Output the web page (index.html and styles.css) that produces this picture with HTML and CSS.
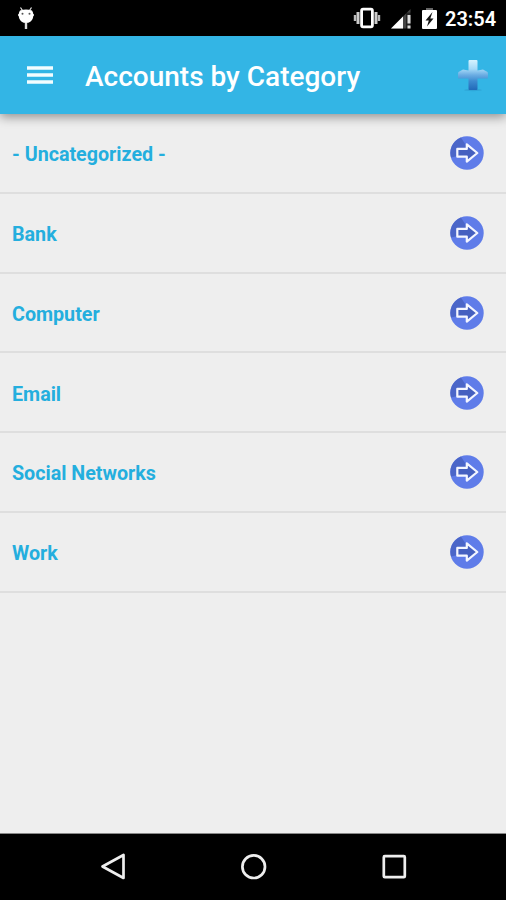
FILE: index.html
```html
<!DOCTYPE html>
<html lang="en">
<head>
    <meta charset="UTF-8">
    <meta name="viewport" content="width=device-width, initial-scale=1.0">
    <title>Accounts by Category</title>
    <link rel="stylesheet" href="styles.css">
</head>
<body>
    <!-- shared arrow icon -->
    <svg class="defs" width="0" height="0">
        <symbol id="arrow" viewBox="0 0 34 34">
            <circle cx="17" cy="17" r="16.7" fill="#5f7ce9"/>
            <path d="M17 11L11 1.4A16.7 16.7 0 0 0 1 21.5L8 20z" fill="#4b66c8"/>
            <path d="M7.3 12.9h9.5V8.4l10.5 8.6-10.5 8.6v-4.9H7.3z" fill="#4560c0" stroke="#f4f6ff" stroke-width="2.2" stroke-linejoin="round"/>
        </symbol>
    </svg>

    <div class="screen">
        <div class="status-bar">
            <svg class="bean" width="18" height="24" viewBox="0 0 18 24">
                <path d="M3.5 1.5l2 3M14.5 1.5l-2 3" stroke="#eee" stroke-width="1.2"/>
                <path d="M3 4.5Q9 2.5 15 4.5C18 9 16 17 9 17S0 9 3 4.5z" fill="#fff"/>
                <path d="M1 9h16" stroke="#fff" stroke-width="1.5"/>
                <path d="M9 17v6" stroke="#ddd" stroke-width="2.4"/>
                <circle cx="5.5" cy="7.8" r="1" fill="#555"/>
                <circle cx="12.5" cy="7.8" r="1" fill="#555"/>
            </svg>
            <div class="status-icons">
                <svg width="28" height="22" viewBox="0 0 28 22">
                    <rect x="8.6" y="2.2" width="10.8" height="17.6" rx="1.5" fill="none" stroke="#fff" stroke-width="2.8"/>
                    <path d="M5 5v12M23 5v12" stroke="#ccc" stroke-width="3"/>
                    <path d="M2 8v6M26 8v6" stroke="#bbb" stroke-width="2.4"/>
                </svg>
                <svg width="21" height="20" viewBox="0 0 21 20">
                    <path d="M0 19.5L19.5 0v19.5z" fill="#444"/>
                    <path d="M0 19.5L12 7.5v12z" fill="#fff"/>
                    <path d="M15 3.5h6v17h-6z" fill="#000" fill-opacity=".5"/>
                    <path d="M18 6v8.5M18 16.5v3" stroke="#ddd" stroke-width="3"/>
                </svg>
                <svg width="15" height="21" viewBox="0 0 15 21">
                    <path d="M4 0h7v2H4z" fill="#666"/>
                    <rect y="2" width="15" height="19" rx="1" fill="#fff"/>
                    <path d="M10.5 4L3.5 12.5h3.3L5 18.5l6.5-8H8.3z" fill="#111"/>
                </svg>
            </div>
            <span class="clock">23:54</span>
        </div>

        <header class="toolbar">
            <svg class="menu" width="26" height="18" viewBox="0 0 26 18">
                <path d="M0 2h26M0 9h26M0 16h26" stroke="#f4fdff" stroke-width="3.4"/>
            </svg>
            <h1>Accounts by Category</h1>
            <svg class="add" width="32" height="34" viewBox="0 0 32 34">
                <defs>
                    <linearGradient id="plus" gradientUnits="userSpaceOnUse" x1="0" y1="2" x2="0" y2="32">
                        <stop offset="0" stop-color="#d5f3ff"/>
                        <stop offset=".3" stop-color="#a5d9f7"/>
                        <stop offset=".5" stop-color="#6bade3"/>
                        <stop offset=".7" stop-color="#3d8bd0"/>
                        <stop offset="1" stop-color="#2169b8"/>
                    </linearGradient>
                </defs>
                <ellipse cx="16" cy="32" rx="9" ry="1.2" fill="#2584b8" fill-opacity=".3"/>
                <path d="M12.5 2h7q1 0 1 1v9.5L26 11.5l4.5 2.5q.8 1 .3 6.500H20.5V31q0 1-1 1h-7q-1 0-1-1V20.5H1.2q-.5-5.500.3-6.500L6 11.500l5.500 1V3q0-1 1-1z" fill="url(#plus)"/>
            </svg>
        </header>

        <ul class="categories">
            <li><span>- Uncategorized -</span><svg class="go"><use href="#arrow"/></svg></li>
            <li><span>Bank</span><svg class="go"><use href="#arrow"/></svg></li>
            <li><span>Computer</span><svg class="go"><use href="#arrow"/></svg></li>
            <li><span>Email</span><svg class="go"><use href="#arrow"/></svg></li>
            <li><span>Social Networks</span><svg class="go"><use href="#arrow"/></svg></li>
            <li><span>Work</span><svg class="go"><use href="#arrow"/></svg></li>
        </ul>

        <nav class="nav-bar">
            <svg width="28" height="28" viewBox="0 0 28 28">
                <path d="M3.5 13.5L24.5 2v23z"/>
            </svg>
            <svg width="28" height="28" viewBox="0 0 28 28">
                <circle cx="13.7" cy="13.7" r="11.3"/>
            </svg>
            <svg width="28" height="28" viewBox="0 0 28 28">
                <rect x="3.8" y="3.2" width="21" height="21" rx="1"/>
            </svg>
        </nav>
    </div>
</body>
</html>
```
FILE: styles.css
```css
* {
    box-sizing: border-box;
}

body {
    margin: 0;
    font-family: Roboto, "Liberation Sans", sans-serif;
    background-color: #eeeeee;
}

svg {
    display: block;
    flex: none;
}

.defs {
    display: none;
}

.screen {
    display: flex;
    flex-direction: column;
    width: 506px;
    height: 900px;
    overflow: hidden;
}

.status-bar {
    display: flex;
    align-items: center;
    height: 36px;
    padding: 0 10px 0 17px;
    background-color: #000;
    color: #fff;
}

.status-icons {
    display: flex;
    align-items: center;
    gap: 10px;
    margin-left: auto;
}

.status-icons svg:nth-child(2) {
    margin-top: 2px;
}

.clock {
    width: 51px;
    margin-left: 8px;
    padding-top: 2px;
    font-size: 20px;
    font-weight: 600;
    white-space: nowrap;
}

.toolbar {
    display: flex;
    align-items: center;
    height: 78px;
    padding: 0 17px 0 27px;
    background-color: #33b5e5;
    box-shadow: 0 3px 10px rgba(0, 0, 0, 0.4);
    z-index: 1;
}

.toolbar h1 {
    margin: 3px 0 0 32px;
    color: #fff;
    font-size: 28px;
    font-weight: 500;
    line-height: 34px;
    white-space: nowrap;
}

.add {
    margin-left: auto;
}

.categories {
    flex: 1;
    margin: 0;
    padding: 0;
    list-style: none;
}

.categories li {
    display: flex;
    align-items: center;
    justify-content: space-between;
    height: 79.75px;
    padding: 1px 22px 0 12px;
    border-bottom: 2px solid #dedede;
    color: #24aede;
    font-size: 19.7px;
    font-weight: 700;
}

.categories span {
    padding-top: 3px;
}

.go {
    width: 34px;
    height: 34px;
}

.nav-bar {
    display: flex;
    align-items: center;
    justify-content: space-between;
    height: 67px;
    padding: 0 98px 0 99px;
    border-top: 1px solid #888;
    background-color: #000;
}

.nav-bar svg {
    fill: none;
    stroke: #eee;
    stroke-width: 2.7;
    stroke-linejoin: round;
}
```
